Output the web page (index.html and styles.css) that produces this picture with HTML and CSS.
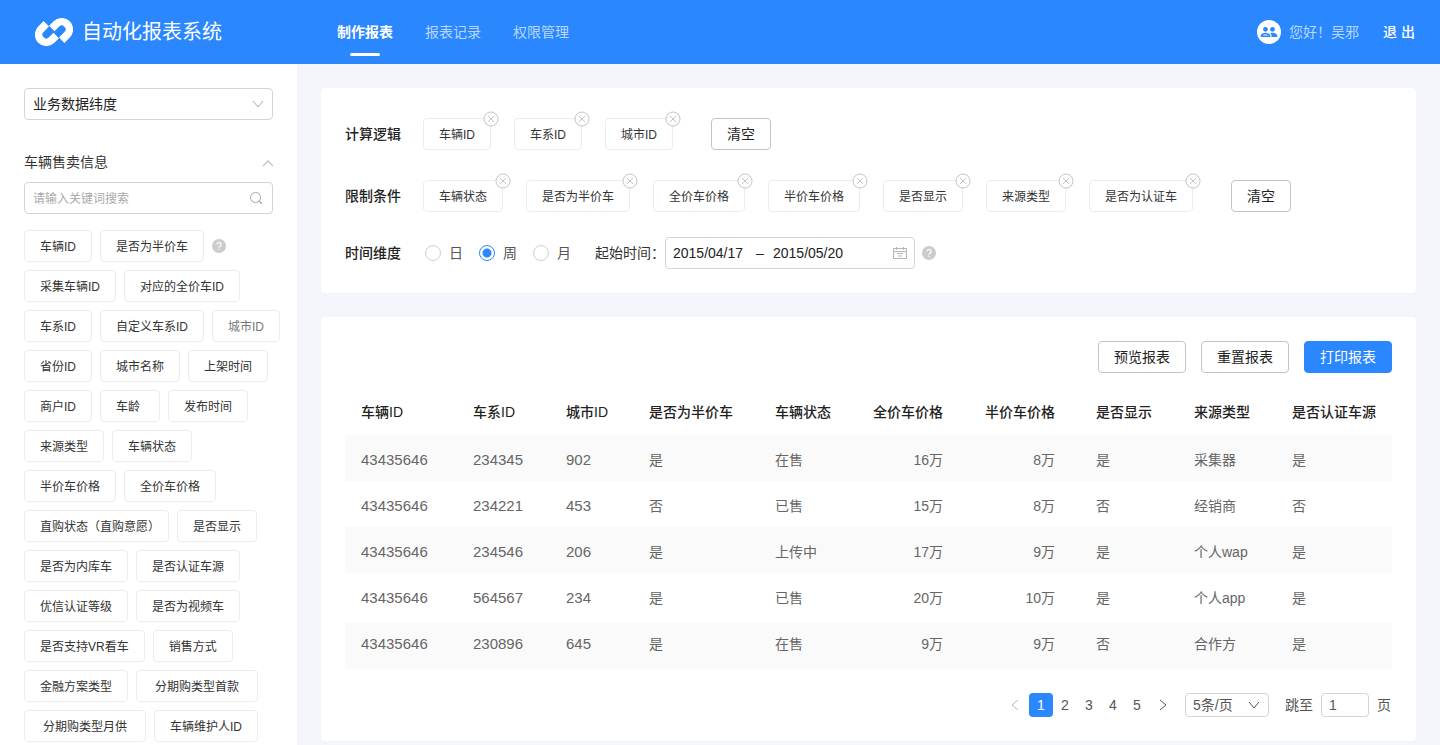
FILE: index.html
```html
<!DOCTYPE html>
<html lang="zh-CN">
<head>
    <meta charset="UTF-8">
    <meta name="viewport" content="width=device-width, initial-scale=1.0">
    <title>自动化报表系统</title>
    <link rel="stylesheet" href="styles.css">
</head>
<body>
    <!-- shared icons -->
    <svg class="icon-defs" aria-hidden="true">
        <symbol id="icon-down" viewBox="0 0 12 12"><path d="M1 3l5 6 5-6" fill="none" stroke="currentColor"/></symbol>
        <symbol id="icon-close" viewBox="0 0 16 16"><circle cx="8" cy="8" r="7" fill="#fff" stroke="#c4c4c4"/><path d="M5 5l6 6M11 5l-6 6" fill="none" stroke="#c4c4c4"/></symbol>
        <symbol id="icon-help" viewBox="0 0 14 14"><circle cx="7" cy="7" r="7" fill="#ccc"/><path d="M5 5.5a2 2 0 1 1 3 1.7c-.7.4-1 .7-1 1.4M7 9.8v1.2" fill="none" stroke="#fff" stroke-width="1.2"/></symbol>
    </svg>

    <header class="header">
        <div class="brand">
            <svg class="logo" width="38" height="28" viewBox="0 0 38 28">
                <g fill="none" stroke="#fff" stroke-width="7.6">
                    <path d="M11.300 5.800L5.900 11.200A7.600 7.600 0 0 0 16.700 22L21.200 17.500"/>
                    <path d="M26.700 22.200L32.100 16.800A7.600 7.600 0 0 0 21.300 6L16.800 10.500"/>
                </g>
            </svg>
            <h1>自动化报表系统</h1>
        </div>
        <nav class="nav">
            <a href="#" class="active">制作报表</a>
            <a href="#">报表记录</a>
            <a href="#">权限管理</a>
        </nav>
        <div class="user">
            <svg width="24" height="24" viewBox="0 0 24 24">
                <circle cx="12" cy="12" r="12" fill="#fff"/>
                <g fill="#2a87fe">
                    <circle cx="8.500" cy="9.300" r="2.400"/>
                    <circle cx="15.500" cy="9.300" r="2.400"/>
                    <path d="M3.800 17v-1.500c0-1.900 3.100-2.800 4.700-2.800s4.700.9 4.700 2.800V17z"/>
                    <path d="M14.400 17v-1.500c0-1.100-.4-1.900-1.200-2.500.8-.2 1.700-.3 2.300-.3 1.600 0 4.700.9 4.700 2.800V17z"/>
                </g>
                <path d="M5.500 15.600c.6-.8 1.900-1.200 3-1.200s2.400.4 3 1.200z" fill="#fff"/>
            </svg>
            <span>您好！吴邪</span>
            <a href="#">退 出</a>
        </div>
    </header>

    <div class="layout">
        <aside class="sidebar">
            <div class="select dimension">
                <select aria-label="数据维度">
                    <option>业务数据纬度</option>
                </select>
                <svg width="12" height="12"><use href="#icon-down"/></svg>
            </div>

            <div class="group-title">
                <h2>车辆售卖信息</h2>
                <svg width="12" height="12" viewBox="0 0 12 12"><path d="M2 10l5-5 5 5" fill="none" stroke="#c4c4c4" stroke-width="1.400"/></svg>
            </div>
            <div class="search">
                <input type="text" aria-label="搜索" placeholder="请输入关键词搜索">
                <svg width="14" height="14" viewBox="0 0 14 14"><circle cx="6.500" cy="6.500" r="5" fill="none" stroke="#a6a6a6"/><path d="M10 10l3 3" stroke="#a6a6a6" stroke-width="1.200"/></svg>
            </div>

            <div class="tag-rows">
                <div class="tag-row">
                    <button class="tag">车辆ID</button>
                    <button class="tag">是否为半价车</button>
                    <svg width="14" height="14"><use href="#icon-help"/></svg>
                </div>
                <div class="tag-row">
                    <button class="tag">采集车辆ID</button>
                    <button class="tag">对应的全价车ID</button>
                </div>
                <div class="tag-row">
                    <button class="tag">车系ID</button>
                    <button class="tag">自定义车系ID</button>
                    <button class="tag tag-muted">城市ID</button>
                </div>
                <div class="tag-row">
                    <button class="tag">省份ID</button>
                    <button class="tag">城市名称</button>
                    <button class="tag">上架时间</button>
                </div>
                <div class="tag-row">
                    <button class="tag">商户ID</button>
                    <button class="tag tag-short">车龄</button>
                    <button class="tag">发布时间</button>
                </div>
                <div class="tag-row">
                    <button class="tag">来源类型</button>
                    <button class="tag">车辆状态</button>
                </div>
                <div class="tag-row">
                    <button class="tag">半价车价格</button>
                    <button class="tag">全价车价格</button>
                </div>
                <div class="tag-row">
                    <button class="tag tag-bracket">直购状态（直购意愿）</button>
                    <button class="tag">是否显示</button>
                </div>
                <div class="tag-row">
                    <button class="tag">是否为内库车</button>
                    <button class="tag">是否认证车源</button>
                </div>
                <div class="tag-row">
                    <button class="tag">优信认证等级</button>
                    <button class="tag">是否为视频车</button>
                </div>
                <div class="tag-row">
                    <button class="tag">是否支持VR看车</button>
                    <button class="tag">销售方式</button>
                </div>
                <div class="tag-row">
                    <button class="tag">金融方案类型</button>
                    <button class="tag tag-wide">分期购类型首款</button>
                </div>
                <div class="tag-row">
                    <button class="tag tag-wide">分期购类型月供</button>
                    <button class="tag">车辆维护人ID</button>
                </div>
            </div>
        </aside>

        <main class="main">
            <section class="card filters">
                <div class="filter-row">
                    <h3>计算逻辑</h3>
                    <div class="picked">
                        <span class="tag">车辆ID<button aria-label="删除"><svg width="16" height="16"><use href="#icon-close"/></svg></button></span>
                        <span class="tag">车系ID<button aria-label="删除"><svg width="16" height="16"><use href="#icon-close"/></svg></button></span>
                        <span class="tag">城市ID<button aria-label="删除"><svg width="16" height="16"><use href="#icon-close"/></svg></button></span>
                    </div>
                    <button class="btn btn-clear">清空</button>
                </div>
                <div class="filter-row">
                    <h3>限制条件</h3>
                    <div class="picked">
                        <span class="tag">车辆状态<button aria-label="删除"><svg width="16" height="16"><use href="#icon-close"/></svg></button></span>
                        <span class="tag">是否为半价车<button aria-label="删除"><svg width="16" height="16"><use href="#icon-close"/></svg></button></span>
                        <span class="tag">全价车价格<button aria-label="删除"><svg width="16" height="16"><use href="#icon-close"/></svg></button></span>
                        <span class="tag">半价车价格<button aria-label="删除"><svg width="16" height="16"><use href="#icon-close"/></svg></button></span>
                        <span class="tag">是否显示<button aria-label="删除"><svg width="16" height="16"><use href="#icon-close"/></svg></button></span>
                        <span class="tag">来源类型<button aria-label="删除"><svg width="16" height="16"><use href="#icon-close"/></svg></button></span>
                        <span class="tag">是否为认证车<button aria-label="删除"><svg width="16" height="16"><use href="#icon-close"/></svg></button></span>
                    </div>
                    <button class="btn btn-clear">清空</button>
                </div>
                <div class="filter-row filter-time">
                    <h3>时间维度</h3>
                    <div class="radios">
                        <label><input type="radio" name="unit">日</label>
                        <label><input type="radio" name="unit" checked>周</label>
                        <label><input type="radio" name="unit">月</label>
                    </div>
                    <label class="time-label" for="startDate">起始时间：</label>
                    <div class="date-range">
                        <input type="text" id="startDate" value="2015/04/17">
                        <span>–</span>
                        <input type="text" aria-label="结束时间" value="2015/05/20">
                        <svg width="14" height="14" viewBox="0 0 14 14"><path d="M.5 2.500h13v10H.5zM.5 5.500h13M3.500 1v3M10.500 1v3M4 7.500h6M5 10h4" fill="none" stroke="#b5b5b5"/></svg>
                    </div>
                    <svg width="14" height="14"><use href="#icon-help"/></svg>
                </div>
            </section>

            <section class="card report">
                <div class="actions">
                    <button class="btn">预览报表</button>
                    <button class="btn">重置报表</button>
                    <button class="btn btn-primary">打印报表</button>
                </div>

                <table class="table">
                    <colgroup>
                        <col class="col-id">
                        <col class="col-series">
                        <col class="col-city">
                        <col class="col-half">
                        <col class="col-status">
                        <col class="col-price">
                        <col class="col-half-price">
                        <col class="col-show">
                        <col class="col-source">
                        <col class="col-cert">
                    </colgroup>
                    <thead>
                        <tr>
                            <th>车辆ID</th>
                            <th>车系ID</th>
                            <th>城市ID</th>
                            <th>是否为半价车</th>
                            <th>车辆状态</th>
                            <th class="price">全价车价格</th>
                            <th class="price">半价车价格</th>
                            <th class="show">是否显示</th>
                            <th>来源类型</th>
                            <th>是否认证车源</th>
                        </tr>
                    </thead>
                    <tbody>
                        <tr>
                            <td class="num">43435646</td>
                            <td class="num">234345</td>
                            <td class="num">902</td>
                            <td>是</td>
                            <td>在售</td>
                            <td class="price">16万</td>
                            <td class="price">8万</td>
                            <td class="show">是</td>
                            <td>采集器</td>
                            <td>是</td>
                        </tr>
                        <tr>
                            <td class="num">43435646</td>
                            <td class="num">234221</td>
                            <td class="num">453</td>
                            <td>否</td>
                            <td>已售</td>
                            <td class="price">15万</td>
                            <td class="price">8万</td>
                            <td class="show">否</td>
                            <td>经销商</td>
                            <td>否</td>
                        </tr>
                        <tr>
                            <td class="num">43435646</td>
                            <td class="num">234546</td>
                            <td class="num">206</td>
                            <td>是</td>
                            <td>上传中</td>
                            <td class="price">17万</td>
                            <td class="price">9万</td>
                            <td class="show">是</td>
                            <td>个人wap</td>
                            <td>是</td>
                        </tr>
                        <tr>
                            <td class="num">43435646</td>
                            <td class="num">564567</td>
                            <td class="num">234</td>
                            <td>是</td>
                            <td>已售</td>
                            <td class="price">20万</td>
                            <td class="price">10万</td>
                            <td class="show">是</td>
                            <td>个人app</td>
                            <td>是</td>
                        </tr>
                        <tr>
                            <td class="num">43435646</td>
                            <td class="num">230896</td>
                            <td class="num">645</td>
                            <td>是</td>
                            <td>在售</td>
                            <td class="price">9万</td>
                            <td class="price">9万</td>
                            <td class="show">否</td>
                            <td>合作方</td>
                            <td>是</td>
                        </tr>
                    </tbody>
                </table>

                <div class="pagination">
                    <div class="pages">
                        <button class="prev" aria-label="上一页" disabled><svg width="12" height="12" viewBox="0 0 12 12"><path d="M9 1L3 6l6 5" fill="none" stroke="currentColor"/></svg></button>
                        <button class="current">1</button>
                        <button>2</button>
                        <button>3</button>
                        <button>4</button>
                        <button>5</button>
                        <button class="next" aria-label="下一页"><svg width="12" height="12" viewBox="0 0 12 12"><path d="M3 1l6 5-6 5" fill="none" stroke="currentColor"/></svg></button>
                    </div>
                    <div class="select page-size">
                        <select aria-label="每页条数">
                            <option>5条/页</option>
                        </select>
                        <svg width="12" height="12"><use href="#icon-down"/></svg>
                    </div>
                    <div class="jump">
                        <label for="jumpPage">跳至</label>
                        <input type="text" id="jumpPage" value="1">
                        <span>页</span>
                    </div>
                </div>
            </section>
        </main>
    </div>
</body>
</html>
```
FILE: styles.css
```css
* {
    margin: 0;
    padding: 0;
    box-sizing: border-box;
}

body {
    background-color: #f3f5fb;
    color: #333;
    font-family: "Liberation Sans", "Noto Sans CJK SC", sans-serif;
    font-size: 14px;
    line-height: 20px;
}

button,
input,
select {
    font: inherit;
    color: inherit;
    background: none;
    border: none;
    outline: none;
}

button,
select {
    cursor: pointer;
}

a {
    color: inherit;
    text-decoration: none;
}

svg {
    display: block;
    flex-shrink: 0;
}

.icon-defs {
    display: none;
}

/* header */
.header {
    display: flex;
    align-items: center;
    height: 64px;
    padding-right: 25px;
    background-color: #2a87fe;
    color: #fff;
}

.brand {
    display: flex;
    align-items: center;
    gap: 9px;
    width: 297px;
    padding-left: 35px;
}

.brand h1 {
    font-size: 20px;
    font-weight: normal;
    line-height: 28px;
}

.nav {
    display: flex;
    gap: 32px;
    flex: 1;
    padding-left: 40px;
}

.nav a {
    position: relative;
    line-height: 64px;
    color: #b8d7ff;
}

.nav .active {
    color: #fff;
    font-weight: bold;
}

.nav .active::after {
    content: '';
    position: absolute;
    left: 50%;
    bottom: 8px;
    width: 30px;
    height: 3px;
    margin-left: -15px;
    border-radius: 2px;
    background-color: #fff;
}

.user {
    display: flex;
    align-items: center;
    gap: 8px;
    color: #b8d7ff;
}

.user a {
    margin-left: 16px;
    color: #fff;
    font-weight: 500;
}

.layout {
    display: flex;
    min-height: calc(100vh - 64px);
}

/* sidebar */
.sidebar {
    flex-shrink: 0;
    width: 297px;
    padding: 24px 24px 0;
    background-color: #fff;
}

.select {
    position: relative;
}

.select select {
    width: 100%;
    height: 100%;
    padding: 0 8px;
    border: 1px solid #d4d4d4;
    border-radius: 4px;
    appearance: none;
}

.select svg {
    position: absolute;
    top: 50%;
    right: 9px;
    margin-top: -6px;
    pointer-events: none;
}

.dimension {
    height: 32px;
    color: #222;
}

.dimension svg {
    color: #aaa;
}

.group-title {
    display: flex;
    align-items: center;
    justify-content: space-between;
    margin-top: 32px;
}

.group-title h2 {
    font-size: 14px;
    font-weight: normal;
}

.search {
    display: flex;
    align-items: center;
    height: 32px;
    margin-top: 10px;
    padding: 0 9px 0 8px;
    border: 1px solid #d4d4d4;
    border-radius: 4px;
}

.search input {
    flex: 1;
    min-width: 0;
    padding-top: 2px;
    font-size: 12px;
}

.search input::placeholder {
    color: #aaa;
}

.tag-rows {
    display: flex;
    flex-direction: column;
    gap: 8px;
    margin-top: 16px;
}

.tag-row {
    display: flex;
    align-items: center;
    gap: 8px;
}

.tag {
    position: relative;
    flex-shrink: 0;
    height: 32px;
    padding: 1px 15px 0;
    border: 1px solid #ececec;
    border-radius: 4px;
    font-size: 12px;
    line-height: 30px;
    white-space: nowrap;
}

.tag-muted {
    color: #777;
}

.tag-short {
    padding-right: 19px;
}

.tag-wide {
    padding-right: 18px;
    padding-left: 18px;
}

/* the closing bracket already brings its own space */
.tag-bracket {
    padding-right: 8px;
}

/* main */
.main {
    flex: 1;
    min-width: 0;
    padding: 24px 24px 0;
}

.card {
    padding: 24px;
    border-radius: 4px;
    background-color: #fff;
}

.filters {
    padding-top: 30px;
}

.filter-row {
    display: flex;
    align-items: center;
    margin-bottom: 30px;
}

.filter-row h3 {
    width: 78px;
    font-size: 14px;
    font-weight: 500;
    color: #222;
}

.picked {
    display: flex;
    gap: 23px;
}

.picked button {
    position: absolute;
    top: -8px;
    right: -9px;
    height: 16px;
}

.btn {
    height: 32px;
    padding: 0 15px;
    border: 1px solid #c4c4c4;
    border-radius: 4px;
    color: #222;
}

.btn-primary {
    border-color: #2a87fe;
    background-color: #2a87fe;
    color: #fff;
}

.btn-clear {
    margin-left: 38px;
}

.filter-time {
    margin: -5px 0 0;
}

.radios {
    display: flex;
    gap: 16px;
    padding-left: 2px;
    color: #555;
}

.radios label {
    display: flex;
    align-items: center;
    gap: 8px;
}

.radios input {
    width: 16px;
    height: 16px;
    border: 1px solid #d0d0d0;
    border-radius: 50%;
    appearance: none;
}

.radios input:checked {
    border-color: #2a87fe;
    background: radial-gradient(circle, #2a87fe 4px, #fff 5px);
}

.time-label {
    margin-left: 24px;
}

.date-range {
    display: flex;
    align-items: center;
    width: 250px;
    height: 32px;
    margin-right: 7px;
    padding: 0 7px;
    border: 1px solid #d4d4d4;
    border-radius: 4px;
    color: #222;
}

.date-range input {
    width: 74px;
}

.date-range span {
    width: 26px;
    text-align: center;
}

.date-range svg {
    margin-left: auto;
}

.report {
    margin-top: 24px;
}

.actions {
    display: flex;
    justify-content: flex-end;
    gap: 15px;
}

.table {
    width: 100%;
    margin-top: 16px;
    border-collapse: collapse;
    table-layout: fixed;
}

.col-id { width: 112px; }
.col-series { width: 93px; }
.col-city { width: 83px; }
.col-half { width: 126px; }
.col-status { width: 98px; }
.col-price { width: 102px; }
.col-half-price { width: 112px; }
.col-show { width: 107px; }
.col-source { width: 98px; }
.col-cert { width: 116px; }

.table th,
.table td {
    height: 46px;
    padding: 0 0 0 16px;
    text-align: left;
    white-space: nowrap;
}

.table th {
    color: #222;
    font-weight: 500;
}

.table td {
    padding-top: 4px;
    color: #666;
}

.table tbody tr:nth-child(odd) {
    background-color: #fafafa;
}

.table tbody tr:nth-child(4) td {
    height: 50px;
    padding-top: 0;
}

.table tbody tr:last-child td {
    padding-top: 0;
    padding-bottom: 4px;
}

.table .num {
    font-size: 15px;
}

.table .price {
    padding-right: 16px;
    text-align: right;
}

.table .show {
    padding-left: 25px;
}

/* pagination */
.pagination {
    display: flex;
    align-items: center;
    justify-content: flex-end;
    margin-top: 24px;
    padding-right: 1px;
    color: #555;
}

.pages {
    display: flex;
}

.pages button {
    display: flex;
    align-items: center;
    justify-content: center;
    width: 24px;
    height: 24px;
    border-radius: 4px;
}

.pages .current {
    background-color: #2a87fe;
    color: #fff;
}

.pages .prev {
    margin-right: 2px;
    color: #bbb;
}

.pages .next {
    margin-left: 2px;
}

.page-size {
    width: 84px;
    height: 24px;
    margin: 0 16px 0 10px;
}

.page-size select {
    padding: 0 7px;
}

.jump {
    display: flex;
    align-items: center;
    gap: 8px;
}

.jump input {
    width: 48px;
    height: 24px;
    padding: 0 7px;
    border: 1px solid #d4d4d4;
    border-radius: 4px;
}
```
